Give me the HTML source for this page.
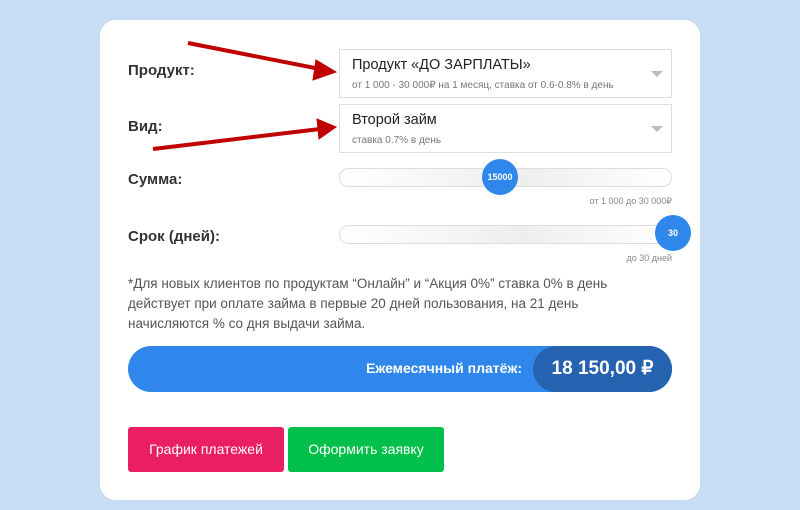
<!DOCTYPE html>
<html><head><meta charset="utf-8"><style>
*{margin:0;padding:0;box-sizing:border-box}
body{width:800px;height:510px;background:#c6ddf4;font-family:"Liberation Sans","Noto Sans CJK SC",sans-serif;position:relative;overflow:hidden}
.card{position:absolute;left:100px;top:20px;width:600px;height:480px;background:#fff;border-radius:16px}
.lbl{position:absolute;left:128px;font-weight:bold;font-size:15px;color:#333}
.sel{position:absolute;left:339px;width:333px;height:49px;border:1px solid #ddd;background:#fff}
.sel .t{position:absolute;left:12px;top:7px;font-size:14.5px;color:#222}
.sel .s{position:absolute;left:12px;top:30px;font-size:10px;color:#777}
.sel .a{position:absolute;right:8px;top:21px;width:0;height:0;border-left:6px solid transparent;border-right:6px solid transparent;border-top:6px solid #bbb}
.tr{position:absolute;left:339px;width:333px;height:19px;border:1px solid #ddd;border-radius:10px;background:linear-gradient(90deg,#fff,#eee 55%,#fff)}
.th{position:absolute;width:36px;height:36px;border-radius:50%;background:#2f87ec;color:#fff;font-weight:bold;font-size:9px;text-align:center;line-height:36px}
.small{position:absolute;right:128px;font-size:9px;color:#888}
.note{position:absolute;left:128px;top:274px;width:510px;font-size:13.5px;line-height:20px;color:#555}
.bar{position:absolute;left:128px;top:346px;width:544px;height:46px;border-radius:23px;background:#2f87ec}
.bar .l{position:absolute;right:150px;top:14px;color:#fff;font-weight:bold;font-size:14px}
.bar .p{position:absolute;right:0;top:0;width:139px;height:46px;border-radius:23px;background:#2563b0;color:#fff;font-weight:bold;font-size:19px;text-align:center;line-height:46px}
.btn{position:absolute;top:427px;width:156px;height:45px;border-radius:3px;color:#fff;font-size:14px;text-align:center;line-height:45px}
</style></head><body>
<div class="card"></div>
<div class="lbl" style="top:62px">Продукт:</div>
<div class="lbl" style="top:118px">Вид:</div>
<div class="lbl" style="top:171px">Сумма:</div>
<div class="lbl" style="top:228px">Срок (дней):</div>
<div class="sel" style="top:49px"><div class="t">Продукт «ДО ЗАРПЛАТЫ»</div><div class="s">от 1 000 - 30 000₽ на 1 месяц, ставка от 0.6-0.8% в день</div><div class="a"></div></div>
<div class="sel" style="top:104px"><div class="t">Второй займ</div><div class="s">ставка 0.7% в день</div><div class="a"></div></div>
<div class="tr" style="top:168px"></div>
<div class="th" style="left:482px;top:159px">15000</div>
<div class="small" style="top:196px">от 1 000 до 30 000₽</div>
<div class="tr" style="top:225px"></div>
<div class="th" style="left:655px;top:215px">30</div>
<div class="small" style="top:253px">до 30 дней</div>
<div class="note">*Для новых клиентов по продуктам “Онлайн” и “Акция 0%” ставка 0% в день действует при оплате займа в первые 20 дней пользования, на 21 день начисляются % со дня выдачи займа.</div>
<div class="bar"><div class="l">Ежемесячный платёж:</div><div class="p">18 150,00 ₽</div></div>
<div class="btn" style="left:128px;background:#e91e63">График платежей</div>
<div class="btn" style="left:288px;background:#00c04b">Оформить заявку</div>
<svg style="position:absolute;left:0;top:0" width="800" height="510">
<g fill="#c00000" stroke="#c00000">
<line x1="188" y1="43" x2="320" y2="69" stroke-width="4"/>
<polygon points="336,72 316,60 313,80" stroke-width="1"/>
<line x1="153" y1="149" x2="320" y2="129" stroke-width="4"/>
<polygon points="336,127 317,119 319,139" stroke-width="1"/>
</g></svg>
</body></html>
